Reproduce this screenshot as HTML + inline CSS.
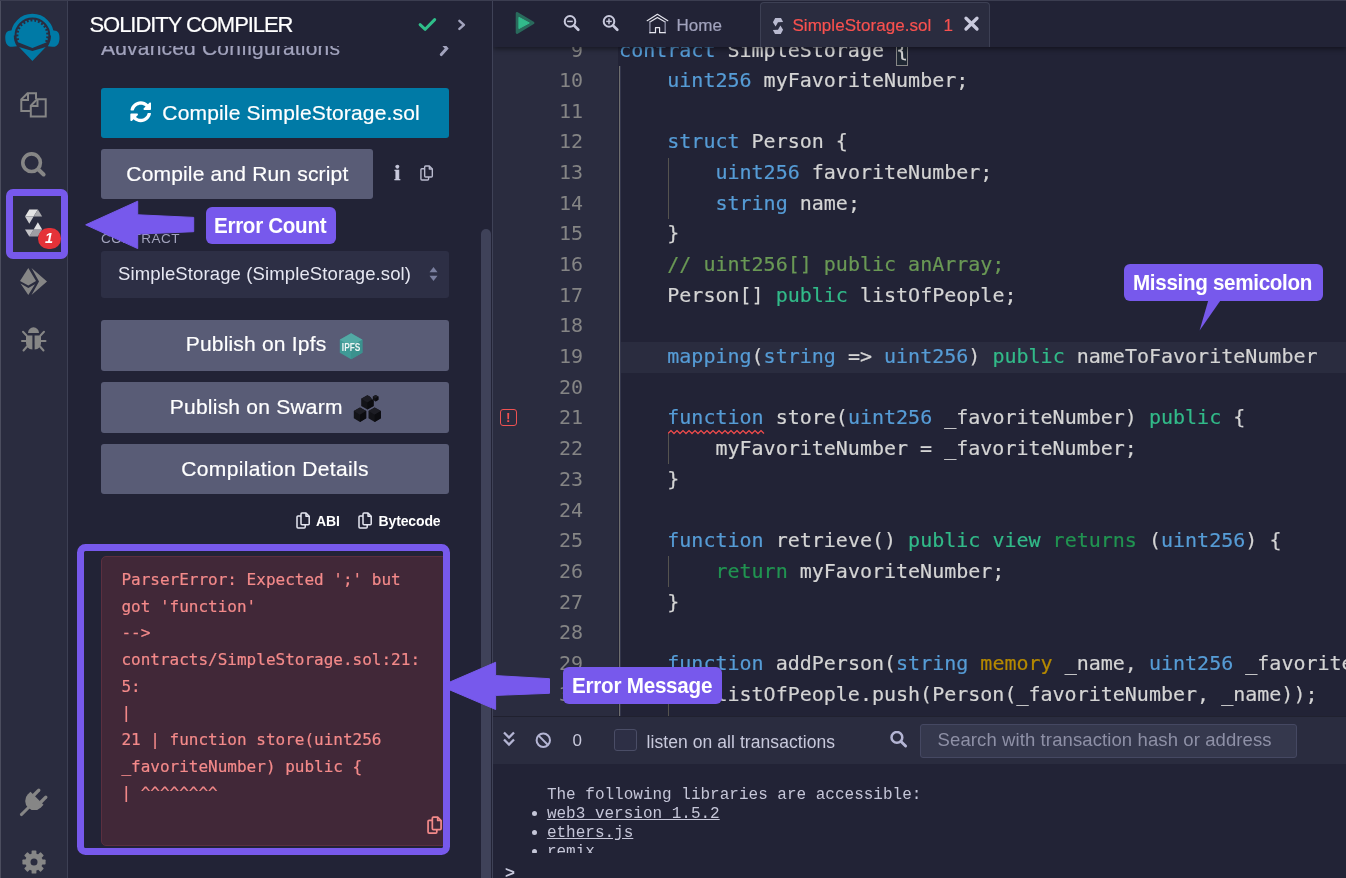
<!DOCTYPE html>
<html lang="en">
<head>
<meta charset="utf-8">
<title>Remix - Solidity Compiler</title>
<style>
*{box-sizing:border-box;margin:0;padding:0}
html,body{width:1346px;height:878px;overflow:hidden;background:#222336}
body{position:relative;font-family:"Liberation Sans",sans-serif;color:#fff}
#root{position:absolute;left:0;top:0;width:1346px;height:878px;will-change:transform}
.abs{position:absolute}
.t{position:absolute;white-space:nowrap;line-height:1}
.tb{-webkit-text-stroke:.2px currentColor}
#iconbar{left:0;top:0;width:68px;height:878px;background:#2a2c3f;border-left:1px solid #4b4d5e;border-right:1px solid #3d4054}
#side{left:68px;top:0;width:424px;height:878px;background:#222336}
.btn{position:absolute;border-radius:3px}
.btn2{background:#595c76}
#divider{left:492px;top:0;width:1px;height:878px;background:#3f4257}
#main{left:493px;top:0;width:853px;height:878px;background:#222336;overflow:hidden}
#tabbar{left:0;top:0;width:853px;height:47px;background:#222336;box-shadow:0 2px 5px rgba(0,0,0,.45);z-index:5}
#editor{left:0;top:47px;width:853px;height:669px;overflow:hidden;background:#222336}
#gutter{left:0;top:0;width:125px;height:669px;background:#2a2c3f}
.ln,.cl{position:absolute;font-family:"DejaVu Sans Mono","Liberation Mono",monospace;font-size:20px;height:30.68px;line-height:30.68px;color:#d4d4d4}
.ln{left:0;width:90px;text-align:right;color:#858585}
.cl{left:126.1px;white-space:pre;-webkit-text-stroke:.2px currentColor}
.k{color:#569cd6}.g{color:#32ba89}.g2{color:#219451}.c{color:#6a9955}.y{color:#b58900}
#termbar{left:0;top:716px;width:853px;height:47.5px;background:#2a2c3f;box-shadow:inset 0 1px 0 #20212f}
#term{left:0;top:763.5px;width:853px;height:114.5px;background:#222336}
.tm{font-family:"Liberation Mono",monospace;font-size:16px;color:#c5c6d8}
.er{position:absolute;left:121.4px;height:26.6px;line-height:26.6px;font-family:"DejaVu Sans Mono","Liberation Mono",monospace;font-size:16px;color:#f48a8a;white-space:pre;-webkit-text-stroke:.2px currentColor}
.ann{background:#7759ec;border-radius:6px;position:absolute;z-index:20}
.at{position:absolute;white-space:nowrap;line-height:1;color:#fff;font-weight:bold;z-index:21;transform-origin:0 50%}
</style>
</head>
<body>
<div id="root">
<div id="iconbar" class="abs"></div>
<svg class="abs" style="left:4px;top:12px" width="58" height="52" viewBox="4 12 58 52">
  <path d="M12.700 35.400 A19.700 19.700 0 0 1 52.100 35.400" fill="none" stroke="#007aa6" stroke-width="3.700"/>
  <path d="M12 30.600 C7 30.100 5.100 33 5.300 38.500 C5.500 44 8 47.300 12.500 46.800 L17 46.200 C13.800 41.500 13.200 36 14.400 31 Z" fill="#007aa6"/>
  <path d="M52.800 30.600 C57.800 30.100 59.700 33 59.500 38.500 C59.300 44 56.800 47.300 52.300 46.800 L47.800 46.200 C51 41.500 51.600 36 50.400 31 Z" fill="#007aa6"/>
  <path d="M18.0 42.2 L17.3 40.3 L19.1 39.8 L18.6 38.1 L16.8 38.4 L16.5 36.4 L18.4 36.3 L18.4 34.6 L16.5 34.4 L16.8 32.5 L18.7 32.8 L19.1 31.1 L17.3 30.5 L18.0 28.7 L19.7 29.5 L20.6 28.0 L19.0 26.9 L20.2 25.3 L21.6 26.6 L22.8 25.3 L21.5 23.9 L23.1 22.6 L24.2 24.2 L25.7 23.2 L24.8 21.6 L26.6 20.7 L27.3 22.5 L28.9 21.9 L28.5 20.1 L30.4 19.7 L30.6 21.6 L32.4 21.5 L32.4 19.6 L34.4 19.7 L34.2 21.6 L35.9 21.9 L36.3 20.1 L38.2 20.7 L37.5 22.5 L39.1 23.2 L40.0 21.6 L41.7 22.6 L40.6 24.2 L42.0 25.3 L43.3 23.9 L44.6 25.3 L43.2 26.6 L44.2 28.0 L45.8 26.9 L46.8 28.7 L45.1 29.5 L45.7 31.1 L47.5 30.5 L48.0 32.5 L46.1 32.8 L46.4 34.6 L48.3 34.4 L48.3 36.4 L46.4 36.3 L46.2 38.1 L48.0 38.4 L47.5 40.3 L45.7 39.8 L45.1 41.4 L46.8 42.2 L32.4 47.9 Z" fill="#007aa6"/>
  <path d="M19 46.900 L32.400 51 L45.800 46.900 L32.400 60.900 Z" fill="#007aa6"/>
</svg>
<svg class="abs" style="left:18px;top:90px" width="32" height="30" viewBox="18 90 32 30" fill="none" stroke="#868686" stroke-width="2" stroke-linejoin="miter">
  <path d="M30 111 H21.300 V99.400 L27.500 93.300 H36 V99"/>
  <path d="M21.300 100 H28 V93.300"/>
  <path d="M30.800 105.700 L37 99.200 H45.700 V116.600 H30.800 Z" fill="#2a2c3f"/>
  <path d="M30.800 106 H37.500 V99.200"/>
</svg>
<svg class="abs" style="left:18px;top:149px" width="32" height="32" viewBox="18 149 32 32" fill="none" stroke="#868686" stroke-linecap="round">
  <circle cx="31.600" cy="162.700" r="8.800" stroke-width="3.600"/>
  <path d="M38.400 169.500 L43.600 174.500" stroke-width="4"/>
</svg>
<svg class="abs" style="left:24px;top:208px" width="20" height="30" viewBox="24 208 20 30">
  <path d="M29.300 209.500 L37.900 209.500 L33.600 216.600 L25 216.600 Z" fill="#e4e4e4"/>
  <path d="M37.900 209.500 L42.200 216.600 L33.600 216.600 Z" fill="#a9a9ad"/>
  <path d="M25 216.600 L33.600 216.600 L29.300 223.700 Z" fill="#cfcfd2"/>
  <path d="M37.900 236.500 L29.300 236.500 L33.600 229.400 L42.200 229.400 Z" fill="#9d9da3"/>
  <path d="M29.300 236.500 L25 229.400 L33.600 229.400 Z" fill="#c4c4c8"/>
  <path d="M42.200 229.400 L33.600 229.400 L37.900 222.300 Z" fill="#e0e0e2"/>
</svg>
<div class="abs" style="left:38px;top:228px;width:23px;height:20.500px;border-radius:10.250px;background:#e53238"></div>
<div class="t" style="left:38px;top:231px;width:22px;text-align:center;font-size:14.500px;font-weight:bold;font-style:italic;color:#fff">1</div>
<svg class="abs" style="left:18px;top:266px" width="32" height="32" viewBox="18 266 32 32" fill="#868686">
  <path d="M28.300 268 L36 281 L28.300 285.500 L20 281 Z"/>
  <path d="M20.500 283.500 L28.300 288 L35 284.200 L28.300 295 Z"/>
  <path d="M31.500 268 L47 281.500 L31.500 295 L39 281.500 Z"/>
</svg>
<svg class="abs" style="left:20px;top:325px" width="28" height="28" viewBox="20 325 28 28">
  <path d="M28 333 A5.500 5.800 0 0 1 39 333 Z" fill="#868686"/>
  <path d="M26 335.500 H32.400 V349.500 C28.500 349.300 26 346.500 26 342.500 Z" fill="#868686"/>
  <path d="M41 335.500 H34.600 V349.500 C38.500 349.300 41 346.500 41 342.500 Z" fill="#868686"/>
  <path d="M26.500 335.500 L23 331.800 M40.500 335.500 L44 331.800 M26 341 H22 M41 341 H45.500 M27 346.500 L23.500 350.500 M40 346.500 L43.500 350.500" stroke="#868686" stroke-width="2" stroke-linecap="round" fill="none"/>
</svg>
<svg class="abs" style="left:16px;top:785px" width="36" height="36" viewBox="16 785 36 36">
  <g transform="rotate(45 33 803)" fill="#868686">
    <rect x="26.400" y="788.200" width="3.300" height="10" rx="1.600"/>
    <rect x="36.300" y="788.200" width="3.300" height="10" rx="1.600"/>
    <path d="M23.300 796.800 H41.700 V800.500 A9.200 9.200 0 0 1 23.300 800.500 Z"/>
    <rect x="31.500" y="808" width="3" height="12.800" rx="1.300"/>
  </g>
</svg>
<svg class="abs" style="left:20px;top:847.500px" width="28" height="28" viewBox="-14 -14 28 28">
  <g fill="#868686">
    <circle r="8.700"/>
    <rect x="-2.400" y="-11.600" width="4.800" height="23.200" rx=".7"/>
    <rect x="-2.400" y="-11.600" width="4.800" height="23.200" rx=".7" transform="rotate(45)"/>
    <rect x="-2.400" y="-11.600" width="4.800" height="23.200" rx=".7" transform="rotate(90)"/>
    <rect x="-2.400" y="-11.600" width="4.800" height="23.200" rx=".7" transform="rotate(135)"/>
  </g>
  <circle r="3.500" fill="#2a2c3f"/>
</svg>
<div id="side" class="abs"></div>
<div class="t tb" style="left:101px;top:36.72px;font-size:21px;letter-spacing:0.197px;color:#a2a3bd;font-weight:400;">Advanced Configurations</div>
<svg class="abs" style="left:436px;top:38px" width="16" height="22" viewBox="436 38 16 22" fill="none" stroke="#a2a3bd" stroke-width="3" stroke-linecap="round" stroke-linejoin="miter"><path d="M441.300 42.400 L446.700 48.600 L441.300 54.600"/></svg>
<div class="abs" style="left:68px;top:0;width:424px;height:46px;background:#222336"></div>
<div class="t tb" style="left:89.5px;top:13.58px;font-size:22px;letter-spacing:-1.055px;color:#fff;font-weight:400;">SOLIDITY COMPILER</div>
<svg class="abs" style="left:415px;top:14px" width="26" height="20" viewBox="415 14 26 20" fill="none" stroke="#2fbf8a" stroke-width="3" stroke-linecap="round" stroke-linejoin="round"><path d="M420.100 24.700 L425.200 29.300 L434.700 19.600"/></svg>
<svg class="abs" style="left:455px;top:16px" width="14" height="18" viewBox="455 16 14 18" fill="none" stroke="#a2a3bd" stroke-width="2.500" stroke-linecap="round" stroke-linejoin="round"><path d="M459.400 20.900 L463.900 24.900 L459.400 28.900"/></svg>
<div class="btn" style="left:101px;top:88px;width:348px;height:50px;background:#007aa6"></div>
<svg class="abs" style="left:129.500px;top:101px" width="21.500" height="21.500" viewBox="0 0 512 512" fill="#fff"><path d="M370.720 133.280C339.458 104.008 298.888 87.962 255.848 88c-77.458.068-144.328 53.178-162.791 126.850-1.344 5.363-6.122 9.150-11.651 9.150H24.103c-7.498 0-13.194-6.807-11.807-14.176C33.933 94.924 134.813 8 256 8c66.448 0 126.791 26.136 171.315 68.685L463.030 40.970C478.149 25.851 504 36.559 504 57.941V192c0 13.255-10.745 24-24 24H345.941c-21.382 0-32.090-25.851-16.971-40.971l41.750-41.749zM32 296h134.059c21.382 0 32.090 25.851 16.971 40.971l-41.750 41.750c31.262 29.273 71.835 45.319 114.876 45.280 77.418-.070 144.315-53.144 162.787-126.849 1.344-5.363 6.122-9.150 11.651-9.150h57.304c7.498 0 13.194 6.807 11.807 14.176C478.067 417.076 377.187 504 256 504c-66.448 0-126.791-26.136-171.315-68.685L48.970 471.030C33.851 486.149 8 475.441 8 454.059V320c0-13.255 10.745-24 24-24z"/></svg>
<div class="t tb" style="left:162.3px;top:101.82px;font-size:21px;letter-spacing:0.175px;color:#fff;font-weight:400;">Compile SimpleStorage.sol</div>
<div class="btn btn2" style="left:101px;top:149px;width:272px;height:50px"></div>
<div class="t tb" style="left:126.3px;top:163.42px;font-size:21px;letter-spacing:0.178px;color:#fff;font-weight:400;">Compile and Run script</div>
<div class="t" style="left:394.300px;top:161.800px;font-family:'Liberation Serif',serif;font-weight:bold;font-size:22px;color:#c8c9dc;-webkit-text-stroke:.5px #c8c9dc">i</div>
<svg class="abs" style="left:420px;top:165px" width="14" height="16" viewBox="0 0 15 17" fill="none" stroke="#b9bace" stroke-width="1.5" stroke-linejoin="round"><path d="M5 3.800 V2 Q5 1 6 1 H10 L13.200 4.200 V11.800 Q13.200 12.800 12.200 12.800 H6 Q5 12.800 5 11.800 Z"/><path d="M10 1 V4.200 H13.200"/><path d="M5 4 H2 Q1 4 1 5 V15 Q1 16 2 16 H8.200 Q9.200 16 9.200 15 V12.800"/></svg>
<div class="t" style="left:101px;top:231.57px;font-size:13.5px;letter-spacing:0.514px;color:#a2a3bd;font-weight:400;">CONTRACT</div>
<div class="btn" style="left:101px;top:251px;width:348px;height:47px;background:#2d2f45"></div>
<div class="t" style="left:118px;top:264.54px;font-size:18.5px;letter-spacing:0.127px;color:#e6e7f2;font-weight:400;">SimpleStorage (SimpleStorage.sol)</div>
<svg class="abs" style="left:429px;top:266px" width="9" height="16" viewBox="0 0 10 18" fill="#7a7f9f"><path d="M5 1 L9.500 7 H.500 Z"/><path d="M5 17 L9.500 11 H.500 Z"/></svg>
<div class="btn btn2" style="left:101px;top:320px;width:348px;height:51px"></div>
<div class="t tb" style="left:185.7px;top:333.22px;font-size:21px;letter-spacing:0.195px;color:#fff;font-weight:400;">Publish on Ipfs</div>
<div class="btn btn2" style="left:101px;top:382px;width:348px;height:51px"></div>
<div class="t tb" style="left:169.8px;top:396.22px;font-size:21px;letter-spacing:0.23px;color:#fff;font-weight:400;">Publish on Swarm</div>
<div class="btn btn2" style="left:101px;top:444px;width:348px;height:50px"></div>
<div class="t tb" style="left:181.3px;top:458.02px;font-size:21px;letter-spacing:0.349px;color:#fff;font-weight:400;">Compilation Details</div>
<svg class="abs" style="left:337px;top:331px" width="29" height="31" viewBox="337 331 29 31"><polygon points="351.1,333.3 362.4,339.8 362.4,352.8 351.1,359.3 339.8,352.8 339.8,339.8" fill="#3f9996"/><polygon points="351.1,333.3 362.4,339.8 351.1,346.3 339.8,339.8" fill="#52a9a4"/><polygon points="362.4,339.8 362.4,352.8 351.1,359.3 351.1,346.3" fill="#3b918e"/><text x="351.100" y="350.600" text-anchor="middle" font-family="Liberation Sans, sans-serif" font-weight="bold" font-size="10" textLength="18.500" lengthAdjust="spacingAndGlyphs" fill="#eef6f5">IPFS</text></svg>
<svg class="abs" style="left:351px;top:392px" width="34" height="32" viewBox="351 392 34 32"><polygon points="360.0,407.5 366.2,411.1 366.2,418.3 360.0,421.9 353.8,418.3 353.8,411.1" fill="#131318"/><polygon points="360.0,407.5 366.2,411.1 360.0,414.7 353.8,411.1" fill="#1d1d24"/><polygon points="366.2,411.1 366.2,418.3 360.0,421.9 360.0,414.7" fill="#0c0c10"/><polygon points="374.7,407.5 380.9,411.1 380.9,418.3 374.7,421.9 368.5,418.3 368.5,411.1" fill="#131318"/><polygon points="374.7,407.5 380.9,411.1 374.7,414.7 368.5,411.1" fill="#1d1d24"/><polygon points="380.9,411.1 380.9,418.3 374.7,421.9 374.7,414.7" fill="#0c0c10"/><polygon points="367.4,395.2 373.6,398.8 373.6,406.0 367.4,409.6 361.2,406.0 361.2,398.8" fill="#131318"/><polygon points="367.4,395.2 373.6,398.8 367.4,402.4 361.2,398.8" fill="#1d1d24"/><polygon points="373.6,398.8 373.6,406.0 367.4,409.6 367.4,402.4" fill="#0c0c10"/><polygon points="368.500,394 376,394 376,402 372,399" fill="#595c76"/><polygon points="375.6,395.0 378.4,396.6 378.4,399.8 375.6,401.4 372.8,399.8 372.8,396.6" fill="#131318"/><polygon points="375.6,395.0 378.4,396.6 375.6,398.2 372.8,396.6" fill="#1d1d24"/><polygon points="378.4,396.6 378.4,399.8 375.6,401.4 375.6,398.2" fill="#0c0c10"/></svg>
<svg class="abs" style="left:295.5px;top:512px" width="15" height="17" viewBox="0 0 15 17" fill="none" stroke="#e6e7f2" stroke-width="1.5" stroke-linejoin="round"><path d="M5 3.800 V2 Q5 1 6 1 H10 L13.200 4.200 V11.800 Q13.200 12.800 12.200 12.800 H6 Q5 12.800 5 11.800 Z"/><path d="M10 1 V4.200 H13.200"/><path d="M5 4 H2 Q1 4 1 5 V15 Q1 16 2 16 H8.200 Q9.200 16 9.200 15 V12.800"/></svg>
<svg class="abs" style="left:358px;top:512px" width="15" height="17" viewBox="0 0 15 17" fill="none" stroke="#e6e7f2" stroke-width="1.5" stroke-linejoin="round"><path d="M5 3.800 V2 Q5 1 6 1 H10 L13.200 4.200 V11.800 Q13.200 12.800 12.200 12.800 H6 Q5 12.800 5 11.800 Z"/><path d="M10 1 V4.200 H13.200"/><path d="M5 4 H2 Q1 4 1 5 V15 Q1 16 2 16 H8.200 Q9.200 16 9.200 15 V12.800"/></svg>
<div class="t" style="left:316px;top:513.75px;font-size:14px;letter-spacing:-0.06px;color:#fff;font-weight:700;">ABI</div>
<div class="t" style="left:378.6px;top:513.75px;font-size:14px;letter-spacing:-0.147px;color:#fff;font-weight:700;">Bytecode</div>
<div class="abs" style="left:101px;top:556px;width:348px;height:290px;background:#412838;border:1px solid #5b2f3f;border-radius:5px"></div>
<div class="er" style="top:567.00px">ParserError: Expected ';' but</div>
<div class="er" style="top:594.00px">got 'function'</div>
<div class="er" style="top:620.00px">--&gt;</div>
<div class="er" style="top:647.00px">contracts/SimpleStorage.sol:21:</div>
<div class="er" style="top:674.00px">5:</div>
<div class="er" style="top:700.00px">|</div>
<div class="er" style="top:727.00px">21 | function store(uint256</div>
<div class="er" style="top:754.00px">_favoriteNumber) public {</div>
<div class="er" style="top:780.00px">| ^^^^^^^^</div>
<svg class="abs" style="left:427px;top:816px" width="16" height="18.2" viewBox="0 0 15 17" fill="none" stroke="#f48a8a" stroke-width="1.6" stroke-linejoin="round"><path d="M5 3.800 V2 Q5 1 6 1 H10 L13.200 4.200 V11.800 Q13.200 12.800 12.200 12.800 H6 Q5 12.800 5 11.800 Z"/><path d="M10 1 V4.200 H13.200"/><path d="M5 4 H2 Q1 4 1 5 V15 Q1 16 2 16 H8.200 Q9.200 16 9.200 15 V12.800"/></svg>
<div class="abs" style="left:77px;top:544px;width:373px;height:311px;border:7px solid #7759ec;border-radius:8.500px;z-index:20"></div>
<div class="abs" style="left:481px;top:229px;width:10px;height:660px;border-radius:5px;background:#3f4259"></div>
<div id="divider" class="abs"></div>
<div id="main" class="abs">
<div id="tabbar" class="abs">
<svg class="abs" style="left:20px;top:9px" width="25" height="28" viewBox="513 9 25 28"><path d="M517.050 13.400 L533.050 22.950 L517.050 32.500 Z" fill="#296a5c" stroke="#296a5c" stroke-width="2.700" stroke-linejoin="round"/><path d="M518.900 17.300 L529.300 22.950 L518.900 28.600 Z" fill="#32ba8b" stroke="#32ba8b" stroke-width="1" stroke-linejoin="round"/></svg>
<svg class="abs" style="left:66.60px;top:11px" width="24" height="24" viewBox="559.60 11 24 24"><circle cx="569.6" cy="21.4" r="5.300" fill="none" stroke="#c8c9dc" stroke-width="2"/><path d="M573.8000000000001 25.599999999999998 L577.9 29.7" stroke="#c8c9dc" stroke-width="2.700" stroke-linecap="round"/><path d="M566.8000000000001 21.4 H572.4" stroke="#c8c9dc" stroke-width="1.500"/></svg>
<svg class="abs" style="left:105.90px;top:11px" width="24" height="24" viewBox="598.90 11 24 24"><circle cx="608.9" cy="21.4" r="5.300" fill="none" stroke="#c8c9dc" stroke-width="2"/><path d="M613.1 25.599999999999998 L617.1999999999999 29.7" stroke="#c8c9dc" stroke-width="2.700" stroke-linecap="round"/><path d="M606.1 21.4 H611.6999999999999" stroke="#c8c9dc" stroke-width="1.500"/><path d="M608.9 18.599999999999998 V24.2" stroke="#c8c9dc" stroke-width="1.500"/></svg>
<svg class="abs" style="left:152px;top:11px" width="25" height="25" viewBox="645 11 25 25" fill="none" stroke-linecap="round" stroke-linejoin="round"><path d="M647.200 20.650 L657.400 14.300 L667.800 20.650" stroke="#e6e6ee" stroke-width="1.200"/><path d="M649.900 22.100 L657.400 17.400 L665.200 22.100" stroke="#e6e6ee" stroke-width="1.200"/><path d="M649.900 22.100 V32.700 M665.200 22.100 V32.700" stroke="#83849a" stroke-width="1.500"/><path d="M649.900 32.700 H655.500 V27.700 H659.600 V32.700 H665.200" stroke="#e6e6ee" stroke-width="1.200"/></svg>
<div class="t tb" style="left:183.4px;top:16.51px;font-size:17px;letter-spacing:0.047px;color:#a2a3bd;font-weight:400;">Home</div>
<div class="abs" style="left:266.5px;top:1.500px;width:230.500px;height:45.500px;background:#2a2c3f;border:1px solid #3d4054;border-bottom:none;border-radius:4px 4px 0 0"></div>
<svg class="abs" style="left:279px;top:17px" width="12" height="18" viewBox="772 17 12 18" fill="#b9bad0"><path d="M775.200 17.900 H781 L783.100 22 L778 22.300 L775.600 26.600 L772.900 22.300 Z"/><path d="M780.800 34.100 H775 L772.900 30 L778 29.700 L780.400 25.400 L783.100 29.700 Z"/></svg>
<div class="t tb" style="left:299.4px;top:16.51px;font-size:17px;letter-spacing:0.06px;color:#f8514f;font-weight:400;">SimpleStorage.sol</div>
<div class="t tb" style="left:450.4px;top:16.51px;font-size:17px;letter-spacing:0px;color:#f8514f;font-weight:400;">1</div>
<svg class="abs" style="left:470px;top:15px" width="17" height="17" viewBox="963 15 17 17" stroke="#c8c9dc" stroke-width="3.300" stroke-linecap="round"><path d="M966 18.200 L977 29 M977 18.200 L966 29"/></svg>
</div>
<div id="editor" class="abs"><div id="gutter" class="abs"></div>
<div class="abs" style="left:127px;top:294.70px;width:730px;height:31px;background:#2a2c3f"></div>
<div class="abs" style="left:126px;top:18.50px;width:1px;height:700px;background:#6e6e6e;box-shadow:1px 0 0 #33354a"></div>
<div class="abs" style="left:174.5px;top:110.54px;width:1px;height:61.36px;background:#55534f"></div>
<div class="abs" style="left:174.5px;top:386.66px;width:1px;height:30.68px;background:#55534f"></div>
<div class="abs" style="left:174.5px;top:509.38px;width:1px;height:30.68px;background:#55534f"></div>
<div class="abs" style="left:174.5px;top:632.10px;width:1px;height:92.04px;background:#55534f"></div>
<div class="abs" style="left:403.3px;top:-12.18px;width:12px;height:31.18px;border:1px solid #888;background:#1f2733"></div>
<div class="ln" style="top:-11.68px">9</div><div class="cl" style="top:-11.68px"><span class="k">contract</span> SimpleStorage {</div>
<div class="ln" style="top:18.00px">10</div><div class="cl" style="top:18.00px">    <span class="k">uint256</span> myFavoriteNumber;</div>
<div class="ln" style="top:48.68px">11</div><div class="cl" style="top:48.68px"></div>
<div class="ln" style="top:79.36px">12</div><div class="cl" style="top:79.36px">    <span class="k">struct</span> Person {</div>
<div class="ln" style="top:110.04px">13</div><div class="cl" style="top:110.04px">        <span class="k">uint256</span> favoriteNumber;</div>
<div class="ln" style="top:140.72px">14</div><div class="cl" style="top:140.72px">        <span class="k">string</span> name;</div>
<div class="ln" style="top:171.40px">15</div><div class="cl" style="top:171.40px">    }</div>
<div class="ln" style="top:202.08px">16</div><div class="cl" style="top:202.08px">    <span class="c">// uint256[] public anArray;</span></div>
<div class="ln" style="top:232.76px">17</div><div class="cl" style="top:232.76px">    Person[] <span class="g">public</span> listOfPeople;</div>
<div class="ln" style="top:263.44px">18</div><div class="cl" style="top:263.44px"></div>
<div class="ln" style="top:294.12px">19</div><div class="cl" style="top:294.12px">    <span class="k">mapping</span>(<span class="k">string</span> =&gt; <span class="k">uint256</span>) <span class="g">public</span> nameToFavoriteNumber</div>
<div class="ln" style="top:324.80px">20</div><div class="cl" style="top:324.80px"></div>
<div class="ln" style="top:355.48px">21</div><div class="cl" style="top:355.48px">    <span class="k">function</span> store(<span class="k">uint256</span> _favoriteNumber) <span class="g">public</span> {</div>
<div class="ln" style="top:386.16px">22</div><div class="cl" style="top:386.16px">        myFavoriteNumber = _favoriteNumber;</div>
<div class="ln" style="top:416.84px">23</div><div class="cl" style="top:416.84px">    }</div>
<div class="ln" style="top:447.52px">24</div><div class="cl" style="top:447.52px"></div>
<div class="ln" style="top:478.20px">25</div><div class="cl" style="top:478.20px">    <span class="k">function</span> retrieve() <span class="g">public</span> <span class="g">view</span> <span class="g2">returns</span> (<span class="k">uint256</span>) {</div>
<div class="ln" style="top:508.88px">26</div><div class="cl" style="top:508.88px">        <span class="g2">return</span> myFavoriteNumber;</div>
<div class="ln" style="top:539.56px">27</div><div class="cl" style="top:539.56px">    }</div>
<div class="ln" style="top:570.24px">28</div><div class="cl" style="top:570.24px"></div>
<div class="ln" style="top:600.92px">29</div><div class="cl" style="top:600.92px">    <span class="k">function</span> addPerson(<span class="k">string</span> <span class="y">memory</span> _name, <span class="k">uint256</span> _favoriteNumber) <span class="g">public</span> {</div>
<div class="ln" style="top:631.60px">30</div><div class="cl" style="top:631.60px">        listOfPeople.push(Person(_favoriteNumber, _name));</div>
<div class="ln" style="top:662.28px">31</div><div class="cl" style="top:662.28px">        nameToFavoriteNumber[_name] = _favoriteNumber;</div>
<div class="abs" style="left:6.5px;top:361.80px;width:17.500px;height:17px;border:1.600px solid #ee5252;border-radius:3px"></div>
<div class="t" style="left:6.5px;top:364.00px;width:17.500px;text-align:center;font-size:13.500px;font-weight:bold;color:#ee5252">!</div>
<svg class="abs" style="left:175px;top:382px" width="97" height="6" viewBox="0 0 97 6" fill="none" stroke="#f14c4c" stroke-width="1.300"><path d="M0 4.500 L3.0 1.6 L6.0 4.5 L9.0 1.6 L12.0 4.5 L15.0 1.6 L18.0 4.5 L21.0 1.6 L24.0 4.5 L27.0 1.6 L30.0 4.5 L33.0 1.6 L36.0 4.5 L39.0 1.6 L42.0 4.5 L45.0 1.6 L48.0 4.5 L51.0 1.6 L54.0 4.5 L57.0 1.6 L60.0 4.5 L63.0 1.6 L66.0 4.5 L69.0 1.6 L72.0 4.5 L75.0 1.6 L78.0 4.5 L81.0 1.6 L84.0 4.5 L87.0 1.6 L90.0 4.5 L93.0 1.6 L96.0 4.5"/></svg>
</div>
<div id="termbar" class="abs">
<svg class="abs" style="left:9px;top:14px" width="14" height="18" viewBox="0 0 14 18" fill="none" stroke="#b4b5d4" stroke-width="2.300"><path d="M2 2.500 L7 7.500 L12 2.500 M2 9.500 L7 14.500 L12 9.500"/></svg>
<svg class="abs" style="left:41px;top:15px" width="19" height="19" viewBox="0 0 19 19" fill="none" stroke="#b4b5d4" stroke-width="2"><circle cx="9.300" cy="9.300" r="6.700"/><path d="M4.600 4.600 L14 14"/></svg>
<div class="t" style="left:79.5px;top:16.11px;font-size:17px;letter-spacing:0px;color:#c8c9dc;font-weight:400;">0</div>
<div class="abs" style="left:121px;top:13px;width:22.500px;height:22px;border:1px solid #4a4d66;border-radius:3px;background:#2d2f45"></div>
<div class="t" style="left:153.5px;top:17.79px;font-size:17.5px;letter-spacing:0.069px;color:#c8c9dc;font-weight:400;">listen on all transactions</div>
<svg class="abs" style="left:397px;top:15px" width="18" height="18" viewBox="0 0 18 18" fill="none" stroke="#b4b5d4" stroke-linecap="round"><circle cx="6.900" cy="6.400" r="5.400" stroke-width="2.500"/><path d="M11.200 10.700 L15.600 15" stroke-width="2.900"/></svg>
<div class="abs" style="left:427.3px;top:8.20px;width:376.500px;height:33.600px;background:#35384d;border:1px solid #454862;border-radius:3px"></div>
<div class="t" style="left:444.6px;top:14.84px;font-size:18.5px;letter-spacing:0.103px;color:#8e90a6;font-weight:400;">Search with transaction hash or address</div>
</div>
<div id="term" class="abs">
<div class="abs" style="left:0;top:0;width:853px;height:89.500px;overflow:hidden">
<div class="t tm" style="left:53.9px;top:23.23px;">The following libraries are accessible:</div>
<div class="abs" style="left:38.5px;top:47.20px;width:5px;height:5px;border-radius:50%;background:#c5c6d8"></div>
<div class="t tm" style="left:53.9px;top:42.43px;text-decoration:underline">web3 version 1.5.2</div>
<div class="abs" style="left:38.5px;top:66.20px;width:5px;height:5px;border-radius:50%;background:#c5c6d8"></div>
<div class="t tm" style="left:53.9px;top:61.43px;text-decoration:underline">ethers.js</div>
<div class="abs" style="left:38.5px;top:85.20px;width:5px;height:5px;border-radius:50%;background:#c5c6d8"></div>
<div class="t tm" style="left:53.9px;top:80.43px;text-decoration:underline">remix</div>
</div>
<div class="t" style="left:12px;top:100.61px;font-size:17px;letter-spacing:0px;color:#c8c9dc;font-weight:700;">&gt;</div>
</div>
</div>
<div class="abs" style="left:6px;top:189px;width:62px;height:70px;border:7px solid #7759ec;border-radius:7px;z-index:20"></div>
<svg class="abs" style="left:80px;top:196px;z-index:20" width="120" height="58" viewBox="80 196 120 58"><path d="M85.700 224.800 L137.700 201.200 L137.700 214.800 L193.700 217.400 L193.700 231.700 L137.700 234.100 L137.700 248.600 Z" fill="#7759ec" stroke="#7759ec" stroke-width="1" stroke-linejoin="round"/></svg>
<div class="ann" style="left:205.800px;top:207px;width:130px;height:36.700px"></div>
<div class="at" style="left:213.6px;top:214.51px;font-size:22.2px;letter-spacing:-0.349px;transform:scaleX(0.93)">Error Count</div>
<svg class="abs" style="left:444px;top:656px;z-index:20" width="111" height="60" viewBox="444 656 111 60"><path d="M440.700 686 L495.600 662.300 L495.600 675.600 L549.500 678.700 L549.500 693.300 L495.600 695.400 L495.600 709.500 Z" fill="#7759ec" stroke="#7759ec" stroke-width="1" stroke-linejoin="round"/></svg>
<div class="ann" style="left:563px;top:667.200px;width:159px;height:36.600px"></div>
<div class="at" style="left:572px;top:674.51px;font-size:22.2px;letter-spacing:-0.264px;transform:scaleX(0.93)">Error Message</div>
<div class="ann" style="left:1123.800px;top:263.700px;width:199.200px;height:37.100px"></div>
<svg class="abs" style="left:1195px;top:298px;z-index:20" width="30" height="36" viewBox="1195 298 30 36"><path d="M1208.700 299 L1221.500 299 L1199.600 330.400 Z" fill="#7759ec"/></svg>
<div class="at" style="left:1132.5px;top:271.51px;font-size:22.2px;letter-spacing:-0.350px;transform:scaleX(0.93)">Missing semicolon</div>
<div class="abs" style="left:0;top:0;width:1346px;height:1px;background:#3b3d50;z-index:30"></div>
</div>
</body>
</html>
